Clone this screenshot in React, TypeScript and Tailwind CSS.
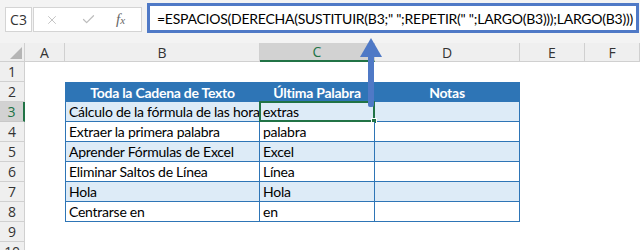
import { Check, X } from 'lucide-react'

const cols = ['A', 'B', 'C', 'D', 'E', 'F']

const rows = [
  { b: 'Cálculo de la fórmula de las horas extras', c: 'extras', shade: true },
  { b: 'Extraer la primera palabra', c: 'palabra', shade: false },
  { b: 'Aprender Fórmulas de Excel', c: 'Excel', shade: true },
  { b: 'Eliminar Saltos de Línea', c: 'Línea', shade: false },
  { b: 'Hola', c: 'Hola', shade: true },
  { b: 'Centrarse en', c: 'en', shade: false },
]

const formula = '=ESPACIOS(DERECHA(SUSTITUIR(B3;" ";REPETIR(" ";LARGO(B3)));LARGO(B3)))'

function RowHead({ n, active }: { n: number; active?: boolean }) {
  return (
    <div
      className={
        active
          ? 'flex h-[20px] items-center justify-center border-b border-r-2 border-b-[#c8c8c8] border-r-[#217346] bg-[#d2d2d2] font-["Open_Sans",sans-serif] text-[14px] text-[#217346]'
          : 'flex h-[20px] items-center justify-center border-b border-r border-[#d0d0d0] bg-[#efefef] font-["Open_Sans",sans-serif] text-[14px] text-[#333]'
      }>
      {n}
    </div>
  )
}

export default function App() {
  return (
    <div className="relative h-[250px] w-[640px] overflow-hidden bg-white font-['Lato',sans-serif] text-[14px] tracking-[-0.25px] text-black">
      {/* formula bar */}
      <div className="flex h-[43px] items-start bg-[#f3f3f3] pl-[5px] pt-[3px]">
        <div className="mt-[4px] flex h-[25px] w-[27px] shrink-0 items-center justify-center border border-[#d4d4d4] bg-white font-['Open_Sans',sans-serif] text-[14px] tracking-normal text-[#333]">
          C3
        </div>
        <div className="ml-[1px] mt-[4px] flex h-[25px] w-[109px] shrink-0 items-center border border-[#d4d4d4] bg-white">
          <X className="ml-[11px] h-[14px] w-[14px] text-[#bdbdbd]" strokeWidth={1.5} />
          <Check className="ml-[22px] h-[15px] w-[15px] text-[#bdbdbd]" strokeWidth={2} />
          <span className="ml-[20px] font-['Liberation_Serif',serif] text-[15px] italic tracking-normal text-[#666]">
            f<span className="text-[11px]">x</span>
          </span>
        </div>
        <div className="ml-[5px] flex h-[30px] min-w-0 flex-1 items-center overflow-hidden whitespace-nowrap border-[3px] border-[#4f79c6] bg-white pl-[7px]">
          {formula}
        </div>
        <div className="w-[1px] shrink-0" />
      </div>

      {/* grid */}
      <div className="grid grid-cols-[25px_40px_195px_115px_145px_65px_55px]">
        {/* column headers */}
        <div className="flex h-[19px] items-end justify-end border-b border-r border-[#d0d0d0] bg-[#efefef] pb-[2px] pr-[2px]">
          <div className="h-0 w-0 border-b-[12px] border-l-[12px] border-b-[#b5b5b5] border-l-transparent" />
        </div>
        {cols.map((c) => (
          <div
            key={c}
            className={
              c === 'C'
                ? 'flex h-[19px] items-center justify-center border-b-2 border-r border-b-[#217346] border-r-[#d0d0d0] bg-[#d2d2d2] font-["Open_Sans",sans-serif] text-[14px] tracking-normal text-[#217346]'
                : 'flex h-[19px] items-center justify-center border-b border-r border-[#d0d0d0] bg-[#efefef] font-["Open_Sans",sans-serif] text-[14px] tracking-normal text-[#333]'
            }>
            {c}
          </div>
        ))}

        {/* row 1 */}
        <RowHead n={1} />
        <div className="col-span-6 h-[20px]" />

        {/* row 2: table header */}
        <RowHead n={2} />
        <div />
        <div className="flex h-[20px] items-center justify-center border border-[#2e75b6] bg-[#2e75b6] font-bold text-white">
          Toda la Cadena de Texto
        </div>
        <div className="flex h-[20px] items-center justify-center border-y border-r border-[#2e75b6] bg-[#2e75b6] font-bold text-white">
          Última Palabra
        </div>
        <div className="flex h-[20px] items-center justify-center border-y border-r border-[#2e75b6] bg-[#2e75b6] font-bold text-white">
          Notas
        </div>
        <div className="col-span-2" />

        {rows.map((r, i) => {
          const bg = r.shade ? 'bg-[#ddebf7]' : 'bg-white'
          return [
            <RowHead key={`h${i}`} n={i + 3} active={i === 0} />,
            <div key={`a${i}`} />,
            <div
              key={`b${i}`}
              className={`flex h-[20px] items-center overflow-hidden whitespace-nowrap border-x border-b border-[#2e75b6] pl-[3px] ${bg}`}>
              {r.b}
            </div>,
            <div
              key={`c${i}`}
              className={`relative flex h-[20px] items-center whitespace-nowrap border-b border-r border-[#2e75b6] pl-[3px] ${bg}`}>
              {r.c}
              {i === 0 && (
                <>
                  <div className="absolute -left-[1px] -top-[1px] h-[21px] w-[116px] border-2 border-[#217346]" />
                  <div className="absolute -bottom-[3px] -right-[3px] h-[6px] w-[6px] border border-white bg-[#217346]" />
                </>
              )}
            </div>,
            <div key={`d${i}`} className={`h-[20px] border-b border-r border-[#2e75b6] ${bg}`} />,
            <div key={`e${i}`} className="col-span-2" />,
          ]
        })}

        <RowHead n={9} />
        <div className="col-span-6" />
        <RowHead n={10} />
        <div className="col-span-6" />
      </div>

      {/* arrow pointing at the formula */}
      <svg className="absolute left-[360px] top-[37px]" width="24" height="72" viewBox="0 0 24 72">
        <rect x="8" y="18" width="6" height="52" rx="2" fill="#4f79c6" />
        <polygon points="11,1 22,20 0,20" fill="#4f79c6" />
      </svg>
    </div>
  )
}
